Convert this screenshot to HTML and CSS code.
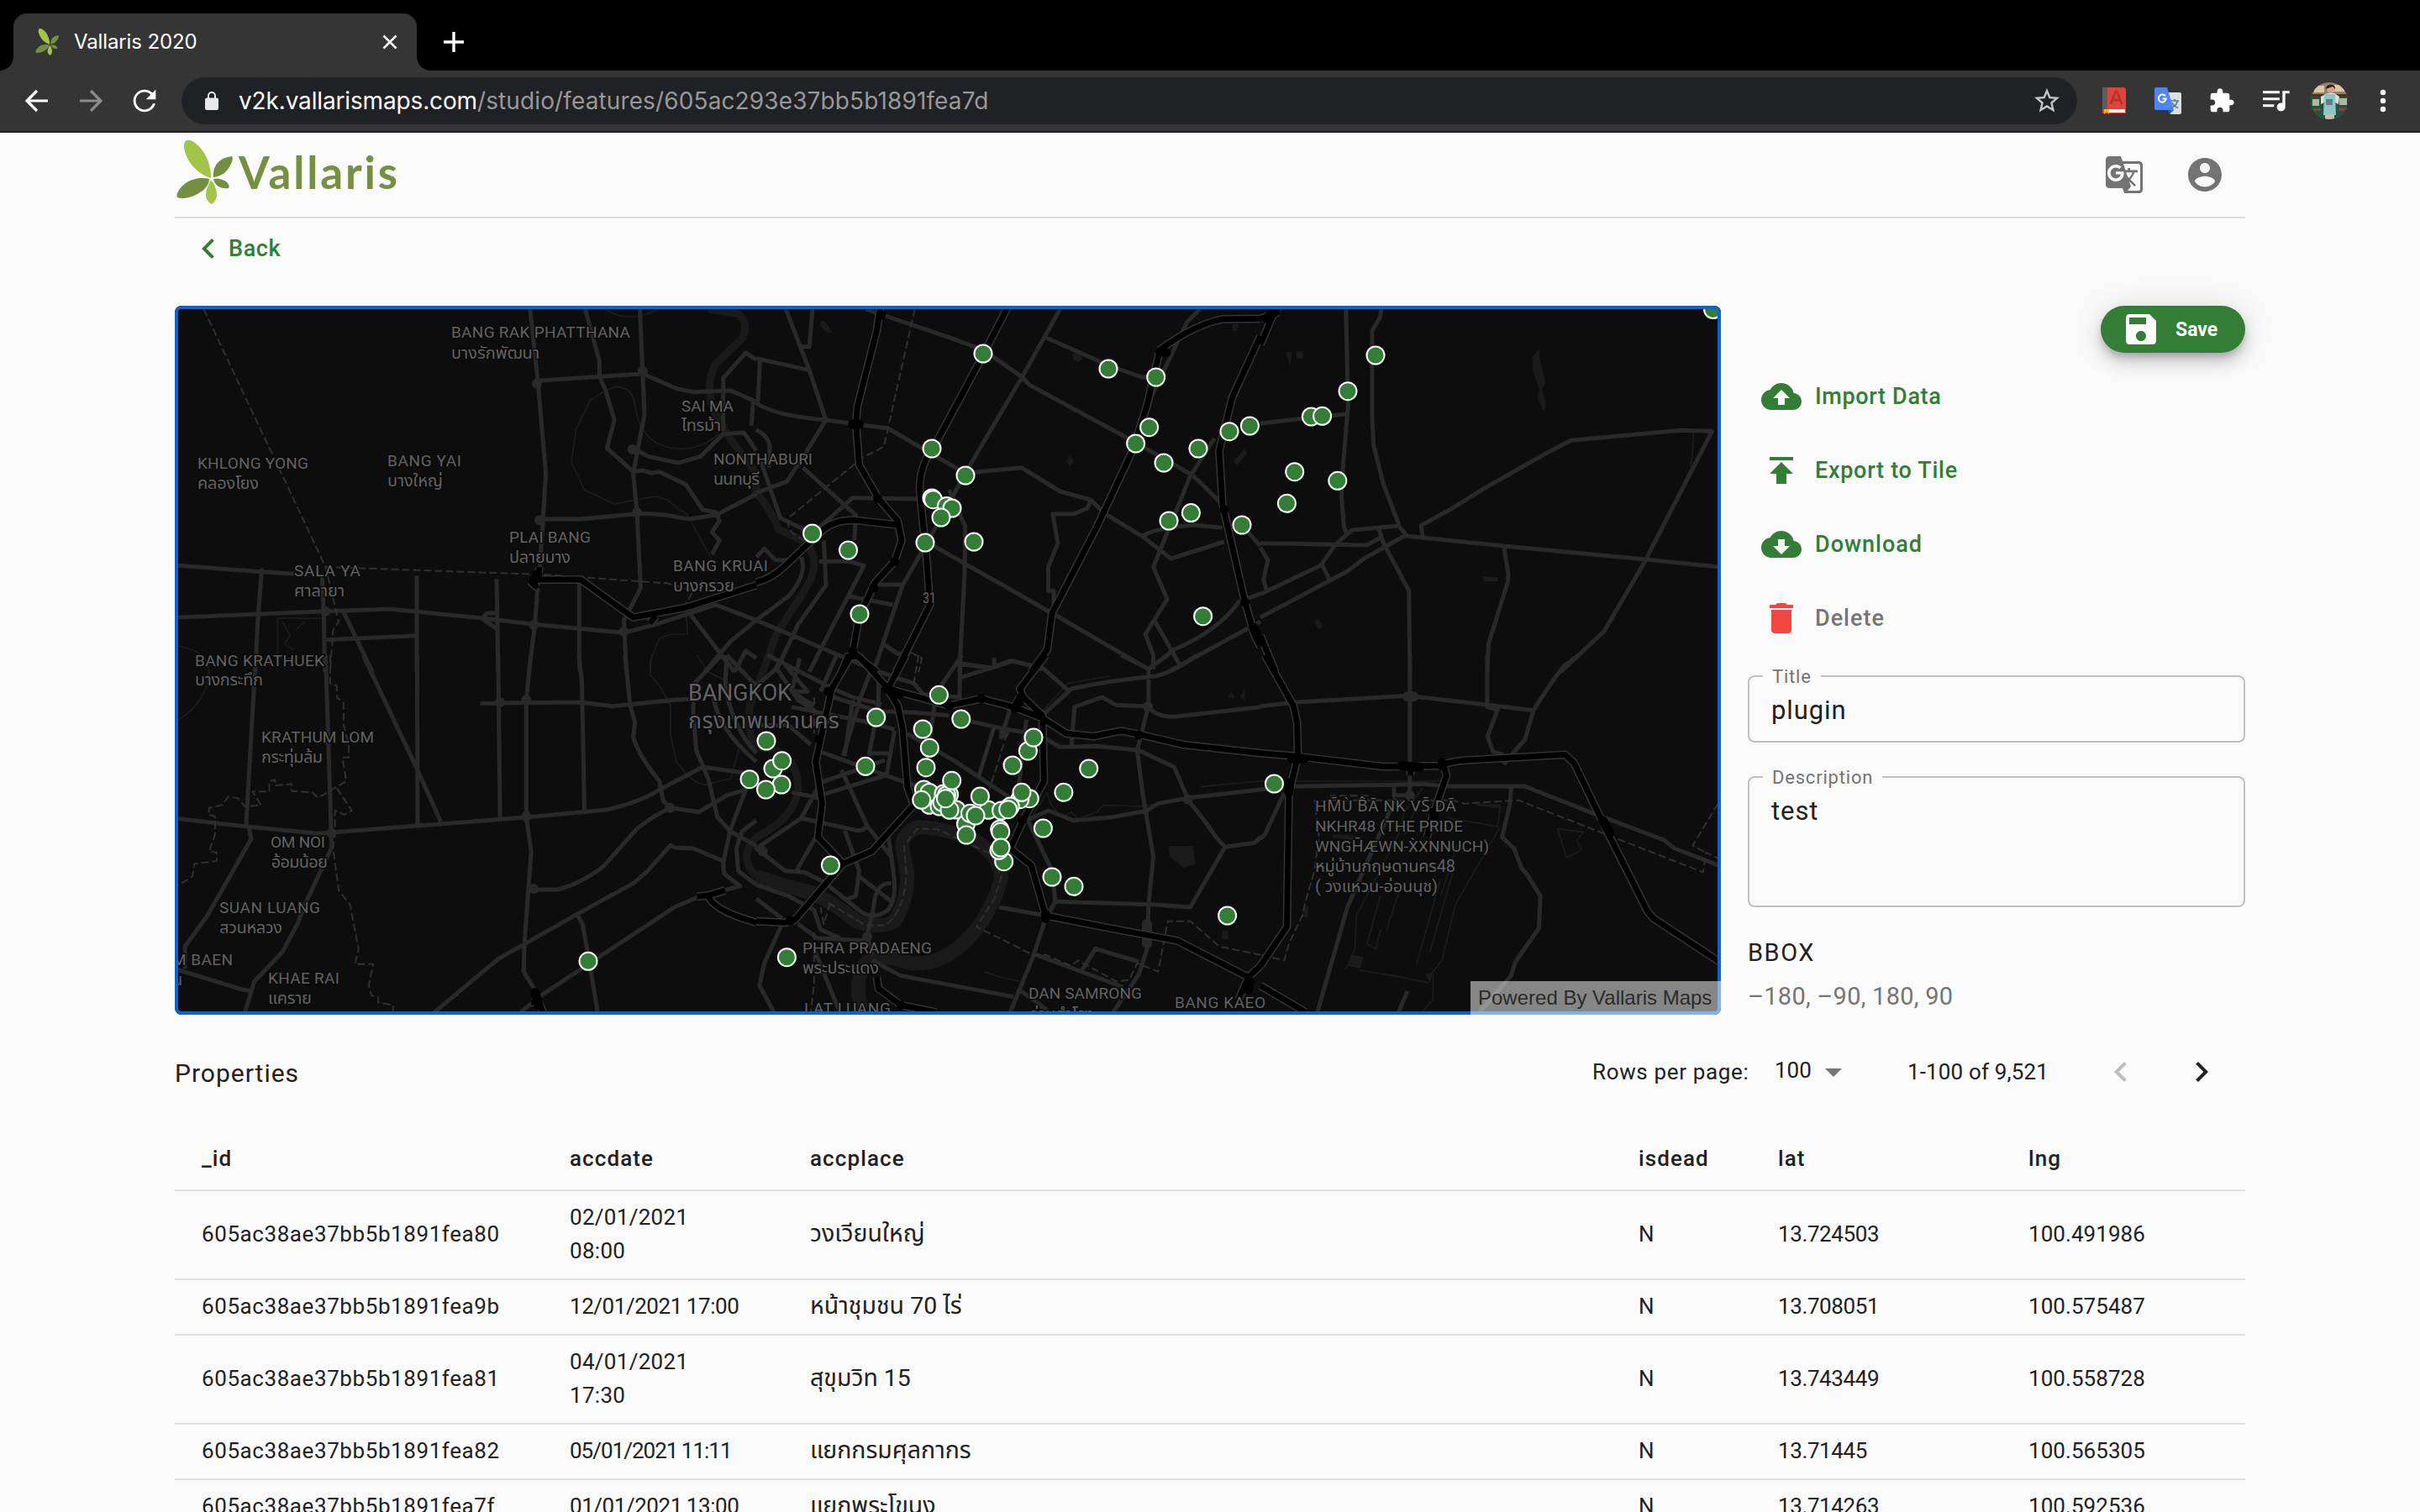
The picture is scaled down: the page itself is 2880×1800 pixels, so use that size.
FILE: index.html
```html
<!DOCTYPE html>
<html lang="en">
<head>
<meta charset="utf-8">
<title>Vallaris 2020</title>
<link rel="stylesheet" href="styles.css">
</head>
<body>
<svg width="0" height="0" class="sprite">
  <symbol id="leaf" viewBox="0 0 67 76">
    <path fill="#a2c449" d="M41 45C28 41 17 31 12 19 9 11 7 3 12 0c6-2 15 6 21 15 6 10 8 20 8 30z"/>
    <path fill="#748f41" d="M44 44c-1-12 5-23 22-25 2 3 0 7-2 11-4 8-11 13-20 14zM39 46C32 44 19 45 11 51 4 56-1 64 1 68c7 3 20-1 27-6 7-4 11-10 11-16zM44 46c6-1 14 1 17 5 2 3 2 5 1 6-9 1-16-2-18-11z"/>
    <path fill="#a2c449" d="M41 47c5 6 7 12 7 18 0 5-4 10-6 11-4-2-7-6-7-11 0-6 3-12 6-18z"/>
  </symbol>
</svg>

<header class="browser">
  <div class="tabs">
    <div class="tab">
      <svg class="favicon"><use href="#leaf"/></svg>
      <span class="tab-title">Vallaris 2020</span>
      <svg class="tab-close" viewBox="0 0 18 18"><path d="M1.500 1.500l15 15M16.500 1.500l-15 15"/></svg>
    </div>
    <svg class="tab-new" viewBox="0 0 24 24"><path d="M12 0v24M0 12h24"/></svg>
  </div>
  <div class="toolbar">
    <div class="tool"><svg width="40" height="40" viewBox="0 0 40 40" class="stroke"><path d="M33 20H8M20 8L8 20l12 12"/></svg></div>
    <div class="tool dim"><svg width="40" height="40" viewBox="0 0 40 40" class="stroke"><path d="M7 20h25M20 8l12 12-12 12"/></svg></div>
    <div class="tool"><svg width="40" height="40" viewBox="0 0 24 24"><path d="M17.650 6.350C16.200 4.900 14.210 4 12 4c-4.420 0-7.990 3.580-7.990 8s3.570 8 7.990 8c3.730 0 6.840-2.550 7.730-6h-1.800c-.8 2.500-3.100 4.250-5.930 4.250-3.450 0-6.250-2.800-6.250-6.250S8.550 5.750 12 5.750c1.750 0 3.300.75 4.400 1.850L13 11h7V4l-2.350 2.350z"/></svg></div>
    <div class="omnibox">
      <svg class="lock" viewBox="0 0 16 22"><path d="M14 7.500h-1V5A5 5 0 0 0 3 5v2.500H2a2 2 0 0 0-2 2V20a2 2 0 0 0 2 2h12a2 2 0 0 0 2-2V9.500a2 2 0 0 0-2-2zM5 7.500V5a3 3 0 0 1 6 0v2.500z"/></svg>
      <span class="url"><span class="host">v2k.vallarismaps.com</span><span class="path">/studio/features/605ac293e37bb5b1891fea7d</span></span>
      <svg class="star" viewBox="0 0 24 24"><path d="M22 9.240l-7.190-.62L12 2 9.190 8.630 2 9.240l5.460 4.730L5.820 21 12 17.270 18.180 21l-1.630-7.030L22 9.240zM12 15.400l-3.760 2.270 1-4.280-3.320-2.880 4.380-.38L12 6.100l1.710 4.040 4.380.38-3.320 2.880 1 4.280L12 15.400z"/></svg>
    </div>
    <div class="tools">
      <div class="tool"><svg width="28" height="32" viewBox="0 0 28 32"><path fill="#e0433b" d="M0 0h26l2 2v29H0z"/><path fill="#5c5c5c" d="M0 0h6v26H0z"/><path fill="#f3eeee" d="M7 26h20v4H7z"/><path fill="#f0b42c" d="M2 26h6v6l-3-3-3 3z"/><path fill="none" stroke="#b0332e" stroke-width="2.500" d="M10 20l5.500-15h2L23 20M12 15h9"/></svg></div>
      <div class="tool"><svg width="32" height="32" viewBox="0 0 32 32"><path fill="#dcdfe0" d="M14 6h16a2 2 0 0 1 2 2v22a2 2 0 0 1-2 2H19z"/><path fill="#5086ec" d="M2 0h13l8 27H2a2 2 0 0 1-2-2V2a2 2 0 0 1 2-2z"/><path fill="#3558c4" d="M16 27h7l-5 5z"/><path fill="none" stroke="#fff" stroke-width="2" d="M13 10.500a4.500 4.500 0 1 0 .8 3H9.500"/><path fill="none" stroke="#5a7d88" stroke-width="1.600" d="M19 16h10M24 14v2M27.500 16c-1 4-4 7-7 8M21 18c1 3 4 5 7 6.500"/></svg></div>
      <div class="tool"><svg width="32" height="32" viewBox="0 0 24 24"><path d="M20.500 11H19V7c0-1.100-.9-2-2-2h-4V3.500C13 2.120 11.880 1 10.500 1S8 2.120 8 3.500V5H4c-1.100 0-1.990.9-1.990 2v3.800H3.500c1.490 0 2.700 1.210 2.700 2.700s-1.210 2.700-2.700 2.700H2V20c0 1.100.9 2 2 2h3.800v-1.500c0-1.490 1.210-2.700 2.700-2.700 1.490 0 2.700 1.210 2.700 2.700V22H17c1.100 0 2-.9 2-2v-4h1.500c1.380 0 2.500-1.120 2.500-2.500S21.880 11 20.500 11z"/></svg></div>
      <div class="tool"><svg width="40" height="40" viewBox="0 0 24 24"><path d="M15 5H3v1.700h12V5zm0 4.800H3v1.700h12V9.800zM3 16.300h8v-1.700H3v1.700zM17 5v8.700c-.31-.11-.65-.18-1-.18a3 3 0 1 0 3 3V6.700h3V5h-5z"/></svg></div>
      <div class="tool"><svg width="44" height="44" viewBox="0 0 44 44"><clipPath id="av"><circle cx="22" cy="22" r="22"/></clipPath><g clip-path="url(#av)"><path fill="#9b7f63" d="M0 0h44v44H0z"/><path fill="#d9c9a8" d="M4 4h12v8H4zM28 3h12v8H28z"/><path fill="#4d3122" d="M0 14h44v3H0z"/><path fill="#205340" d="M0 17h44v27H0z"/><path fill="#a9b9a4" d="M2 20h8v8H2zM34 19h9v8h-9z"/><path fill="#8e3f39" d="M3 31h9v3H3zM33 30h9v4h-9z"/><path fill="#e0ded4" d="M12 17l8-4h8l6 4-1 9-4-2H16l-4 2z"/><path fill="#8fc4c8" d="M16 14h13l1 25H15z"/><path fill="#5d8288" d="M18 20h8v7h-8z"/><path fill="#c9bea9" d="M17 38h11v6H17z"/><circle cx="24" cy="8" r="5" fill="#d5a487"/><path fill="#2b2220" d="M18 8c0-7 12-7 11 0l-3-3z"/></g></svg></div>
      <div class="tool"><svg width="8" height="28" viewBox="0 0 8 28"><circle cx="4" cy="4" r="3.200"/><circle cx="4" cy="14" r="3.200"/><circle cx="4" cy="24" r="3.200"/></svg></div>
    </div>
  </div>
</header>

<div class="page">
  <div class="appbar">
    <div class="brand"><svg class="brand-leaf"><use href="#leaf"/></svg><span class="brand-name">Vallaris</span></div>
    <div class="app-actions">
      <svg class="icon" viewBox="0 0 24 24"><path d="M21 4H11l-1-3H3c-1.100 0-2 .9-2 2v15c0 1.100.9 2 2 2h8l1 3h9c1.100 0 2-.9 2-2V6c0-1.100-.9-2-2-2zM7 16c-2.760 0-5-2.240-5-5s2.240-5 5-5c1.350 0 2.480.5 3.350 1.300L9.030 8.570c-.38-.36-1.040-.78-2.030-.78-1.740 0-3.150 1.440-3.150 3.210S5.260 14.210 7 14.210c2.010 0 2.840-1.440 2.920-2.410H7v-1.710h4.680c.07.31.12.61.12 1.020C11.800 13.970 9.890 16 7 16zm6.170-5.420h3.700c-.43 1.250-1.110 2.430-2.050 3.470-.31-.35-.6-.72-.86-1.100l-.79-2.370zm8.330 9.920c0 .55-.45 1-1 1H14l2-2.500-1.040-3.100 3.100 3.100.92-.92-3.300-3.250.02-.02c1.130-1.250 1.930-2.690 2.400-4.220H20v-1.300h-4.530V8h-1.290v1.290h-1.440L11.460 5.500h9.040c.55 0 1 .45 1 1v14z"/></svg>
      <svg class="icon" viewBox="0 0 24 24"><path d="M12 2C6.480 2 2 6.480 2 12s4.480 10 10 10 10-4.480 10-10S17.520 2 12 2zm0 3c1.660 0 3 1.340 3 3s-1.340 3-3 3-3-1.340-3-3 1.340-3 3-3zm0 14.200c-2.500 0-4.710-1.280-6-3.220.03-1.990 4-3.080 6-3.080 1.990 0 5.970 1.090 6 3.080-1.290 1.940-3.500 3.220-6 3.220z"/></svg>
    </div>
  </div>

  <div class="back-row"><a class="back"><svg class="icon" viewBox="0 0 24 24"><path d="M15.410 7.410L14 6l-6 6 6 6 1.410-1.410L10.830 12z"/></svg><span>Back</span></a></div>

  <main class="content">
    <section class="map">
      <svg class="map-canvas" width="1840" height="844" viewBox="208 364 1840 844">
        <defs>
          <g id="motorways">
            <path transform="translate(200 350) scale(.44643 .33333)" d="M990 975L985 1020H1100L1240 1155 1380 1120 1568 1040M1300 1150l-15 25M965 1025l20 25"/>
            <path transform="translate(900 350) scale(.38265 .33333)" d="M388 30L375 130 315 400 310 460 320 610 380 730 440 810 452 880 430 955 370 1030 320 1150 300 1280 265 1350M300 1280L375 1350M785 40L700 230 560 530Q500 620 510 720L530 950 540 1110 435 1350M0 1030Q50 1015 90 970L200 850Q240 805 310 808L440 825M1568 88L1450 90Q1360 110 1255 200L1215 400 1170 560 1060 830 920 1140 905 1270 855 1350M1568 150L1480 370 1440 560 1450 750 1520 1100 1550 1220 1568 1260"/>
            <path transform="translate(1500 350) scale(.35714 .33333)" d="M65 40L40 80 0 180M0 88L60 65M0 1220L50 1350"/>
            <path transform="translate(200 780) scale(.44643 .33333)" d="M1410 862L1440 858 1485 840M1440 858Q1450 910 1568 955M975 1200L1000 1275M968 1240h25"/>
            <path transform="translate(900 780) scale(.38265 .33333)" d="M265 60L285 5H320L410 120 600 180 700 155 800 185 890 225 965 280 1050 290 1135 270 1200 285 1330 320 1568 350M265 60L235 120 200 300 185 380 205 530 192 650 270 745 360 700 415 630 490 535 470 470 455 260 440 180 410 125M465 0L412 115M900 0L820 120 830 150 890 215 895 450 830 590 790 690 855 750 900 930 1100 975 1310 1020 1530 1150 1568 1110M1530 1150L1500 1230M270 745L120 945 90 955 0 950M375 1150L380 1190 450 1250 560 1275M820 150L800 190"/>
            <path transform="translate(1500 780) scale(.35714 .33333)" d="M15 0L110 180 122 240 125 360 105 450 95 500 88 970 0 1110M0 350L110 360 410 398 600 395Q640 375 720 373L1015 355 1045 385 1160 640 1290 915 1310 940 1530 1095M610 390L620 430 575 570 555 650M500 400V430M0 1180L150 1275"/>
          </g>
        </defs>
        <path class="land" d="M208 364h1840v844H208z"/>

        <g class="river">
          <path transform="translate(200 350) scale(.44643 .33333)" d="M1440 54L1520 70Q1550 100 1530 160L1460 250Q1430 320 1455 420L1500 520 1568 640"/>
          <path transform="translate(900 350) scale(.38265 .33333)" d="M0 640V710Q40 760 70 840L160 890Q200 960 160 1040L60 1220 20 1350"/>
          <path transform="translate(900 780) scale(.38265 .33333)" d="M20 60L-20 180Q-30 280 0 330Q130 330 130 480Q120 580 0 650Q-60 720 0 790"/>
          <path class="wide" transform="translate(900 780) scale(.38265 .33333)" d="M0 790Q100 830 180 850Q260 900 310 950Q380 980 430 950Q470 880 470 780L455 690Q450 640 500 615Q560 610 680 660Q760 720 762 790Q750 870 690 970Q600 1110 480 1100Q360 1050 330 1120Q305 1180 330 1275"/>
        </g>
        <g class="pond">
          <path transform="translate(900 350) scale(.38265 .33333)" d="M200 95l15 5 24 40-20-5-20-20zM983 212h22l10 20-15 12-15-10zM1480 108h20l-5 25h-12zM975 577l13 20-12 18-12-18zM1520 552l5 20-30 40-10-15z"/>
          <path transform="translate(1500 350) scale(.35714 .33333)" d="M928 195L905 230 908 275 930 340 925 375 945 420 952 395 938 335 950 318 930 230zM737 1008l10 18h45v-14zM180 1168l12 30 15-8-12-30zM85 210l20-5-5 50zM120 205h22v25h-22z"/>
          <path transform="translate(900 780) scale(.38265 .33333)" d="M1283 682h75l8 65-35 12-45-40zM1478 130l12 25-22-5zM1520 115v50l-14-15zM1450 985h18v30h-20z"/>
          <path transform="translate(1500 780) scale(.35714 .33333)" d="M305 1068l38 10-10 40-40-8zM720 530l80 2v15l-80-10zM145 895h15l-2 40h-20zM240 640l85 5-15 15-70-8zM550 1140l25-10-10 42z"/>
        </g>
        <g class="thin">
          <path transform="translate(200 350) scale(.44643 .33333)" d="M1165 54Q1230 110 1305 54M1190 332Q1240 330 1245 400Q1260 550 1370 553 1420 553 1470 500M1190 332L1165 345 1125 380 1088 480 1075 600 1110 700 1190 750 1300 722 1330 735 1385 790 1450 950M27 1257Q105 1275 110 1350M1380 1130L1385 1215 1340 1215 1310 1230 1285 1310V1350M410 1158H292V1300H360M305 1170l20 50-15 30 25 20M340 1200l25-30"/>
          <path transform="translate(200 780) scale(.44643 .33333)" d="M27 232Q110 160 108 50M1290 0L1285 70 1310 110 1340 180V290L1355 380Q1400 460 1430 463L1500 440 1525 320M1410 0L1440 60 1500 100"/>
          <path transform="translate(1500 350) scale(.35714 .33333)" d="M1443 495L1440 570 1433 620"/>
          <path transform="translate(900 780) scale(.38265 .33333)" d="M860 570L905 490 915 530 950 580 980 560 1000 585 1060 560 1080 535 1200 540 1250 530M890 200L970 100 1100 75M710 1130L760 1150 820 1165M1380 470L1568 450"/>
          <path transform="translate(1500 780) scale(.35714 .33333)" d="M0 450H600M540 475L480 560 460 640 320 930 315 1050 285 1120M600 800L520 1105M640 780L565 1060M655 680L600 860M420 980L470 820 430 800M800 610L650 890 605 1090 575 1130V1230L540 1272M330 1125L460 1148 560 1170M400 860L355 1030 385 1050 400 980M620 580L790 612 800 540M520 540L480 640M990 620l85 12-20 30 15 35-50 25z"/>
        </g>
        <g class="road">
          <path transform="translate(200 350) scale(.44643 .33333)" d="M965 54L985 300 1007 640 1000 800 990 990M985 1050L978 1180 962 1350M1112 54L1150 240V295L1165 340 1190 450 1170 550 1240 635M1258 54L1265 280 1270 430 1240 640 1250 780 1260 1050 1215 1165 1222 1350M985 310L1265 285 1360 340 1400 350 1500 345 1568 385M1240 550L1280 580 1360 603 1420 580 1480 500 1535 495 1568 560M1480 490V300L1540 210 1568 235M1240 635L1265 630 1290 640 1310 635 1380 680 1425 770 1460 780 1470 810 1450 850 1470 880 1450 930M985 804H1100L1250 785C1330 780 1350 800 1390 803L1460 790 1568 715M27 970L250 992 340 1000M27 1155L420 1133 590 1125 840 1158 975 1180 1215 1210 1300 1180 1460 1110 1568 1165M250 980L240 1150 232 1350M410 1000L415 1133 418 1350M467 1133L545 1350M420 1235L662 1220M663 1005V1350M876 1018L880 1350M1096 1035V1300L1098 1350M1390 1140L1510 1350M1568 1165L1500 1240 1430 1350M1510 1350L1540 1275 1568 1300M876 1140H850L838 1160 876 1195M1560 380L1555 470"/>
          <path transform="translate(900 350) scale(.38265 .33333)" d="M92 54L165 272 217 450 155 565 95 670 0 710M175 54L165 188H140M0 230L165 272M12 235L5 385M0 390Q60 435 217 450L410 480 650 640 825 620 945 705 1040 735 1085 785 1200 865 1290 945 1455 885M340 54L600 155 706 200 825 295 850 325 1180 530 1360 650 1440 740M945 54L825 300 650 640 575 800 455 1040 370 1330M900 155L1095 255 1200 297H1243M1380 54L1340 100 1215 400M145 620L310 790 305 880M170 860L300 728 500 732M0 485Q45 510 42 560L40 620M15 600L75 800 165 850M210 880L217 1040 130 1180 60 1350M195 955H290L335 970 200 1270 165 1350M380 1038H455M290 1080L425 1110M0 1165L380 1350M0 1165L100 1080Q160 1000 140 940M545 895L920 1140 1220 1340M1220 1340L1300 1270Q1440 1200 1500 1100L1568 1070M1280 1350L1568 1170M600 700L650 830 648 1000 632 1350M1040 735L1030 765 990 785H922L938 890 908 975V1060H925V1140M1425 515L1350 650 1235 975 1278 1090 1210 1215 1235 1290V1340M1238 1165L1315 1320M1200 865Q1240 835 1360 825L1450 835M1511 826L1568 900M630 1320L730 1335 800 1310 890 1340M395 1250L440 1285 480 1280M0 940L25 910 60 950 120 950"/>
          <path transform="translate(1500 350) scale(.35714 .33333)" d="M285 54L292 400 275 620 270 720 278 830 287 855M403 54L398 85 372 132V430L377 540 410 680 462 825M0 462L140 445 290 428M0 890L355 897 400 870M0 1072L200 970 250 895 305 843 460 828 490 865 811 900 1285 948 1530 975M0 1155L290 990 345 945 490 858M205 965L230 1020M395 840L410 890 495 1060 498 1350M541 865L535 827 640 765 745 695 950 570 1035 523 1400 487 1505 490 1300 915 1285 948 1145 1205 1020 1330 1000 1350M811 900L826 1000 824 1030 760 1250 756 1350M0 905L25 950 10 1020 20 1055"/>
          <path transform="translate(200 780) scale(.44643 .33333)" d="M232 45L208 610M215 615L222 655 105 930 45 1040V1120M420 0L435 635 435 690 365 890 345 960 305 1060 230 1165 205 1275M18 583L210 612 400 637 960 578 1165 553Q1260 525 1310 480L1425 400 1550 422M520 0L665 410 727 595M664 0L665 603M880 0L885 578M967 0L955 160 955 580 968 700 950 1030 948 1130 980 1200M1095 0L1103 90 1110 553M1218 0L1232 180 1245 240 1240 290Q1250 350 1310 450L1320 520 1340 545M832 172L1100 168 1185 182 1350 160 1400 155M1475 0L1400 105V200L1408 340 1440 440 1465 580 1500 630 1568 680M968 837H1040Q1100 815 1160 755L1250 620Q1290 575 1340 545L1415 560 1490 500 1540 480 1500 620 1480 740 1482 780 1525 825 1480 840M710 1275L880 1085 1090 925 1240 815 1275 775 1340 678 1350 687 1400 690 1480 735M1090 925L1105 960 1125 1110 1145 1275M940 1275L1000 1210 1350 900 1420 860M18 1120L200 1195 225 1200M1568 590L1530 630 1515 690 1520 770 1568 820M1490 0L1485 100Q1500 250 1568 350M1453 150Q1470 270 1568 380M1490 0L1568 110"/>
          <path transform="translate(900 780) scale(.38265 .33333)" d="M35 0L240 120 300 150 390 175M60 40L130 160 250 250M75 15L160 130H110M75 15L60 50 0 110M135 10L110 130 180 180M250 0L200 130M355 60L325 150 270 360M380 80V180L350 360M110 185L350 240 430 265M300 20L420 75 490 100 520 140 640 150M240 150L380 200 490 205 600 215M555 170L525 440M200 345L405 430 530 480M200 455L400 375M200 500L400 430M430 270L405 430M300 160L275 360M355 350H410M470 280L620 380 790 510M640 230L780 265 880 285 945 328 1060 325 1190 340 1300 400 1345 520 1390 585 1430 650 1458 685 1550 670 1568 650M740 255L690 440M790 190L760 300M840 230L815 480M265 410L345 610 420 720M345 610Q330 630 310 625L140 582 200 455M140 582L0 690 90 770 150 775 210 810 330 920Q370 945 410 910Q440 870 425 760L410 640M275 625L320 770 310 860 285 870M320 790L420 880M420 815Q370 810 365 900L345 1000 360 1070M190 640L125 770M635 0L632 145M635 80L745 40 790 20 890 45 970 125M640 0L580 100 568 142M640 30L720 45M740 10V35M890 215L980 120Q1100 90 1240 75Q1300 60 1370 0M1135 0L1220 48 1280 0M1220 48V180L1185 340 1200 480 1235 720 1220 890 1215 1050 1190 1140 1110 1275M980 325L990 185 1075 150 1120 178 1220 183Q1240 220 1300 220L1568 185M840 590L910 555 985 590 1100 580 1215 555 1250 530 1340 510 1568 480M845 590L920 770 930 880 1230 890 1350 900 1458 685M930 880L900 940 860 1080 790 1275M755 900L900 930M360 1090L450 1145 800 1220M825 1200L910 1272M870 1070L1140 1185M1010 1130L1055 1048 1190 1095M80 960L25 1100 10 1180 55 1275M130 960L190 1010 350 1020M180 1050L260 1275M0 820L100 860 180 910 200 980 260 1010M0 870L80 940M110 490L200 510M0 250L100 250 170 320"/>
          <path transform="translate(1500 780) scale(.35714 .33333)" d="M0 182L120 168 490 145 760 178 910 197Q960 110 1010 40L1060 0M498 0V510M756 0V185L790 195 757 290 775 345 810 355M910 197L882 300 810 390M0 480L120 468 450 463 540 460 620 468H880L1110 565 1345 660 1380 690 1530 752M445 463V500H500M80 490L15 640 0 655M450 510L290 900 190 1275M835 470L832 530 805 650 845 690 870 760 890 785 933 860 928 975 850 1095 835 1145 730 1275M490 1200L460 1275"/>
        </g>
        <g class="junction">
          <path transform="translate(200 350) scale(.44643 .33333)" d="M983 320h.1M1265 275h.1M1238 555h.1M990 808h.1M1250 780h.1M420 1133h.1M975 1182h.1M1215 1205h.1"/>
          <path transform="translate(200 780) scale(.44643 .33333)" d="M885 168h.1M955 160h.1M955 575h.1M1338 545h.1M975 835h.1M435 635h.1"/>
          <path transform="translate(900 780) scale(.38265 .33333)" d="M1218 183h.1M1342 515h.1M345 1005h.1M1215 960V1030M770 280h.1M20 700h.1"/>
          <path transform="translate(1500 780) scale(.35714 .33333)" d="M490 148h20M498 500h.1"/>
        </g>
        <g class="border">
          <path transform="translate(200 350) scale(.44643 .33333)" d="M95 54L420 975 455 1170 440 1200 432 1350M420 975L1000 1002 1330 1033 1400 1060 1375 1120"/>
          <path transform="translate(900 350) scale(.38265 .33333)" d="M493 54L397 545 330 585 100 800Q90 860 165 885M480 1280L515 1300 505 1350"/>
          <path transform="translate(200 780) scale(.44643 .33333)" d="M432 0V100L450 110V150L468 170V250L482 320V365H465L475 450 400 510 385 490 330 485V460L285 465V445L270 450V487H225L248 535 205 540 185 510 160 505 145 535 110 545 108 570 125 575V640L110 700 130 705V735L70 745 65 790 20 828M450 475L490 555 470 570 445 555V640L440 690 455 840 485 890 508 1050 498 1103H547L535 1180 542 1215 560 1220V1240L600 1250V1272"/>
          <path transform="translate(900 780) scale(.38265 .33333)" d="M180 150V280M505 0L490 100M230 885L210 960 200 900M225 885L340 965 400 965Q460 920 467 780L460 680 500 620H560L730 710 762 790 740 870 685 970 860 1070 900 1070 980 1110 1000 1090 1120 1165 1160 1160 1185 1100 1250 1130 1280 950 1350 950 1440 1040 1568 1070M780 280L725 480M740 260L690 440M180 990V1170L170 1275"/>
          <path transform="translate(1500 780) scale(.35714 .33333)" d="M360 502H235V518H180L195 650 180 770 150 880 140 930 95 1030 80 1090 0 1070M235 518H640L680 530 860 518 1475 775 1485 705 1525 725M1525 530L1440 680 1485 705"/>
        </g>
        <use href="#motorways" class="casing"/>
        <use href="#motorways" class="core"/>
        <g class="hub">
          <path transform="translate(900 350) scale(.38265 .33333)" d="M388 75h.1M1255 205l20 5M1545 1190l10 20M300 465h20M1520 1100h.1M300 1275h.1M378 730h.1M430 955h.1M365 1050h.1M1455 770h.1"/>
          <path transform="translate(900 780) scale(.38265 .33333)" d="M405 120l40 20M825 150l-20 40M900 925v15M1190 285h.1M1535 1165l-5 30M225 130h.1M600 180h.1M105 948h.1M828 590h.1M700 155h.1M195 300h.1M450 1250h.1"/>
          <path transform="translate(1500 780) scale(.35714 .33333)" d="M105 370h40M470 395l60 5M1140 590l25 45M95 455v35M605 385v10M578 560v20"/>
          <path transform="translate(200 350) scale(.44643 .33333)" d="M985 1000l-10 25"/>
          <path transform="translate(200 780) scale(.44643 .33333)" d="M978 1205l10 45"/>
          <path transform="translate(1500 350) scale(.35714 .33333)" d="M50 62l-30 25"/>
        </g>

        <g class="labels">
          <text x="537" y="402" textLength="213">BANG RAK PHATTHANA</text><text class="th" x="537" y="427" textLength="105">บางรักพัฒนา</text>
          <text x="235" y="558" textLength="132">KHLONG YONG</text><text class="th" x="235" y="582" textLength="73">คลองโยง</text>
          <text x="461" y="555" textLength="88">BANG YAI</text><text class="th" x="461" y="579" textLength="66">บางใหญ่</text>
          <text x="811" y="490" textLength="62">SAI MA</text><text class="th" x="811" y="513" textLength="47">ไทรม้า</text>
          <text x="849" y="553" textLength="118">NONTHABURI</text><text class="th" x="849" y="577" textLength="55">นนทบุรี</text>
          <text x="606" y="646" textLength="97">PLAI BANG</text><text class="th" x="606" y="670" textLength="73">ปลายบาง</text>
          <text x="350" y="686" textLength="79">SALA YA</text><text class="th" x="350" y="710" textLength="60">ศาลายา</text>
          <text x="801" y="680" textLength="113">BANG KRUAI</text><text class="th" x="801" y="704" textLength="73">บางกรวย</text>
          <text x="232" y="793" textLength="154">BANG KRATHUEK</text><text class="th" x="232" y="816" textLength="81">บางกระทึก</text>
          <text x="311" y="884" textLength="134">KRATHUM LOM</text><text class="th" x="311" y="908" textLength="73">กระทุ่มล้ม</text>
          <text x="322" y="1009" textLength="65">OM NOI</text><text class="th" x="322" y="1033" textLength="67">อ้อมน้อย</text>
          <text x="261" y="1087" textLength="120">SUAN LUANG</text><text class="th" x="261" y="1111" textLength="75">สวนหลวง</text>
          <text x="205" y="1149" textLength="72">M BAEN</text><text class="th" x="205" y="1173">น</text>
          <text x="319" y="1171" textLength="85">KHAE RAI</text><text class="th" x="319" y="1195" textLength="52">แคราย</text>
          <text x="955" y="1135" textLength="154">PHRA PRADAENG</text><text class="th" x="955" y="1159" textLength="91">พระประแดง</text>
          <text x="957" y="1207" textLength="103">LAT LUANG</text>
          <text x="1224" y="1189" textLength="135">DAN SAMRONG</text><text class="th" x="1224" y="1214" textLength="78">ด่านสำโรง</text>
          <text x="1398" y="1200" textLength="108">BANG KAEO</text>
          <text x="1098" y="718" textLength="16" lengthAdjust="spacingAndGlyphs">31</text>
          <text x="1565" y="966" textLength="168">HM̄Ù B̂Ā NK VS̄ DĀ</text>
          <text x="1565" y="990" textLength="176">NKHR48 (THE PRIDE</text>
          <text x="1565" y="1014" textLength="207">WNGH̄ÆWN-X̀XNNUCH)</text>
          <text class="th" x="1565" y="1038" textLength="167">หมู่บ้านกฤษดานคร48</text>
          <text class="th" x="1565" y="1062" textLength="146">( วงแหวน-อ่อนนุช)</text>
          <text class="city" x="819" y="834" textLength="123">BANGKOK</text><text class="city" x="819" y="867" textLength="180">กรุงเทพมหานคร</text>
        </g>

        <g class="markers">
          <circle cx="1170" cy="421" r="10.500"/><circle cx="1109" cy="534" r="10.500"/><circle cx="1149" cy="566" r="10.500"/><circle cx="1109" cy="593" r="10.500"/><circle cx="1110.500" cy="594.700" r="10.500"/><circle cx="1126.500" cy="602.500" r="10.500"/><circle cx="1133" cy="605" r="10.500"/><circle cx="1120" cy="616" r="10.500"/><circle cx="1101" cy="646" r="10.500"/><circle cx="1159" cy="645" r="10.500"/><circle cx="966.600" cy="635" r="10.500"/><circle cx="1009.500" cy="655" r="10.500"/><circle cx="1023" cy="731" r="10.500"/><circle cx="1319" cy="439" r="10.500"/><circle cx="1375.700" cy="449" r="10.500"/><circle cx="1367.600" cy="508.700" r="10.500"/><circle cx="1351.600" cy="528" r="10.500"/><circle cx="1385" cy="551" r="10.500"/><circle cx="1426" cy="534" r="10.500"/><circle cx="1463" cy="513.700" r="10.500"/><circle cx="1487.400" cy="507" r="10.500"/><circle cx="1391" cy="620" r="10.500"/><circle cx="1417.400" cy="610.600" r="10.500"/><circle cx="1478" cy="625" r="10.500"/><circle cx="1431.600" cy="733.700" r="10.500"/>
          <circle cx="1637" cy="423" r="10.500"/><circle cx="1604" cy="465.700" r="10.500"/><circle cx="1560.400" cy="496" r="10.500"/><circle cx="1573.600" cy="495.300" r="10.500"/><circle cx="1540.700" cy="561.700" r="10.500"/><circle cx="1591.800" cy="572.300" r="10.500"/><circle cx="1531.400" cy="599.300" r="10.500"/><circle cx="2038.600" cy="368.500" r="10.500"/>
          <circle cx="892" cy="927.700" r="10.500"/><circle cx="700" cy="1144.300" r="10.500"/><circle cx="912" cy="882" r="10.500"/><circle cx="920" cy="915" r="10.500"/><circle cx="930.600" cy="905.700" r="10.500"/><circle cx="930" cy="934" r="10.500"/><circle cx="911.500" cy="940" r="10.500"/><circle cx="1042.700" cy="854" r="10.500"/><circle cx="1030" cy="912.300" r="10.500"/><circle cx="1117.400" cy="827.300" r="10.500"/><circle cx="1143.800" cy="856" r="10.500"/><circle cx="1098.200" cy="868" r="10.500"/><circle cx="1106.300" cy="890.300" r="10.500"/><circle cx="1102" cy="913.700" r="10.500"/>
          <circle cx="1099.400" cy="940" r="10.500"/><circle cx="1106" cy="958.300" r="10.500"/><circle cx="1106" cy="943.500" r="10.500"/><circle cx="1096.700" cy="952.300" r="10.500"/><circle cx="1118" cy="960" r="10.500"/><circle cx="1123" cy="945" r="10.500"/><circle cx="1129.600" cy="946" r="10.500"/><circle cx="1126.500" cy="946.700" r="10.500"/><circle cx="1121" cy="955" r="10.500"/><circle cx="1138" cy="964" r="10.500"/><circle cx="1130" cy="964.300" r="10.500"/><circle cx="1125.400" cy="950.700" r="10.500"/><circle cx="1132.700" cy="929.300" r="10.500"/>
          <circle cx="1149.500" cy="981" r="10.500"/><circle cx="1154.500" cy="968.300" r="10.500"/><circle cx="1176.300" cy="964.300" r="10.500"/><circle cx="1166.400" cy="948" r="10.500"/><circle cx="1161" cy="971" r="10.500"/><circle cx="1150" cy="994" r="10.500"/><circle cx="1225.300" cy="950.700" r="10.500"/><circle cx="1213.800" cy="951.700" r="10.500"/><circle cx="1216" cy="943.300" r="10.500"/><circle cx="1191.600" cy="965" r="10.500"/><circle cx="1202.300" cy="960" r="10.500"/><circle cx="1199.700" cy="963.700" r="10.500"/><circle cx="1205" cy="911" r="10.500"/><circle cx="1223.400" cy="894" r="10.500"/><circle cx="1230" cy="878" r="10.500"/><circle cx="1295.700" cy="915" r="10.500"/><circle cx="1265.900" cy="943.300" r="10.500"/><circle cx="1241.400" cy="986" r="10.500"/><circle cx="1189.700" cy="987.300" r="10.500"/><circle cx="1190.800" cy="990.300" r="10.500"/><circle cx="1194.700" cy="1025.700" r="10.500"/><circle cx="1189" cy="1012.300" r="10.500"/><circle cx="1191" cy="1009" r="10.500"/><circle cx="1252" cy="1044" r="10.500"/><circle cx="1278" cy="1055.300" r="10.500"/><circle cx="988.400" cy="1030" r="10.500"/><circle cx="936.400" cy="1139.700" r="10.500"/><circle cx="1460.600" cy="1090" r="10.500"/><circle cx="1516.400" cy="933" r="10.500"/>
        </g>
      </svg>
      <div class="attribution">Powered By Vallaris Maps</div>
    </section>

    <aside class="side">
      <div class="save-row"><button class="save"><svg class="icon" viewBox="0 0 24 24"><path d="M17 3H5c-1.110 0-2 .9-2 2v14c0 1.100.89 2 2 2h14c1.100 0 2-.9 2-2V7l-4-4zm-5 16c-1.660 0-3-1.340-3-3s1.340-3 3-3 3 1.340 3 3-1.340 3-3 3zm3-10H5V5h10v4z"/></svg><span>Save</span></button></div>
      <nav class="menu">
        <a class="item"><svg class="icon" viewBox="0 0 24 24"><path d="M19.350 10.040C18.670 6.590 15.640 4 12 4 9.110 4 6.600 5.640 5.350 8.040 2.340 8.360 0 10.910 0 14c0 3.310 2.690 6 6 6h13c2.760 0 5-2.240 5-5 0-2.640-2.050-4.780-4.650-4.960zM14 13v4h-4v-4H7l5-5 5 5h-3z"/></svg><span class="t-import">Import Data</span></a>
        <a class="item"><svg class="icon" viewBox="0 0 24 24"><path d="M5 4v2h14V4H5zm0 10h4v6h6v-6h4l-7-7-7 7z"/></svg><span class="t-export">Export to Tile</span></a>
        <a class="item"><svg class="icon" viewBox="0 0 24 24"><path d="M19.350 10.040C18.670 6.590 15.640 4 12 4 9.110 4 6.600 5.640 5.350 8.040 2.340 8.360 0 10.910 0 14c0 3.310 2.690 6 6 6h13c2.760 0 5-2.240 5-5 0-2.640-2.050-4.780-4.650-4.960zM17 13l-5 5-5-5h3V9h4v4h3z"/></svg><span class="t-download">Download</span></a>
        <a class="item delete"><svg class="icon" viewBox="0 0 24 24"><path d="M6 19c0 1.100.9 2 2 2h8c1.100 0 2-.9 2-2V7H6v12zM19 4h-3.500l-1-1h-5l-1 1H5v2h14V4z"/></svg><span class="t-delete">Delete</span></a>
      </nav>
      <div class="field title"><label>Title</label><span class="value">plugin</span></div>
      <div class="field description"><label>Description</label><span class="value">test</span></div>
      <div class="bbox-title">BBOX</div>
      <div class="bbox-value">–180, –90, 180, 90</div>
    </aside>
  </main>

  <div class="table-bar">
    <h2>Properties</h2>
    <div class="pager">
      <span class="rows">Rows per page:</span>
      <span class="size">100</span>
      <svg class="caret" viewBox="0 0 20 10"><path d="M0 0h20L10 10z"/></svg>
      <span class="range">1-100 of 9,521</span>
      <svg class="icon prev" viewBox="0 0 24 24"><path d="M15.410 7.410L14 6l-6 6 6 6 1.410-1.410L10.830 12z"/></svg>
      <svg class="icon next" viewBox="0 0 24 24"><path d="M8.590 16.590L13.170 12 8.590 7.410 10 6l6 6-6 6z"/></svg>
    </div>
  </div>

  <table class="data">
    <colgroup><col class="c-id"><col class="c-date"><col class="c-place"><col class="c-dead"><col class="c-lat"><col class="c-lng"></colgroup>
    <thead><tr><th>_id</th><th>accdate</th><th>accplace</th><th>isdead</th><th>lat</th><th>lng</th></tr></thead>
    <tbody>
      <tr><td>605ac38ae37bb5b1891fea80</td><td>02/01/2021<br>08:00</td><td>วงเวียนใหญ่</td><td>N</td><td>13.724503</td><td>100.491986</td></tr>
      <tr><td>605ac38ae37bb5b1891fea9b</td><td class="one-line">12/01/2021 17:00</td><td>หน้าชุมชน 70 ไร่</td><td>N</td><td>13.708051</td><td>100.575487</td></tr>
      <tr><td>605ac38ae37bb5b1891fea81</td><td>04/01/2021<br>17:30</td><td>สุขุมวิท 15</td><td>N</td><td>13.743449</td><td>100.558728</td></tr>
      <tr><td>605ac38ae37bb5b1891fea82</td><td class="one-line narrow">05/01/2021 11:11</td><td>แยกกรมศุลกากร</td><td>N</td><td>13.71445</td><td>100.565305</td></tr>
      <tr><td>605ac38ae37bb5b1891fea7f</td><td class="one-line">01/01/2021 13:00</td><td>แยกพระโขนง</td><td>N</td><td>13.714263</td><td>100.592536</td></tr>
    </tbody>
  </table>
</div>
</body>
</html>
```
FILE: styles.css
```css
* { box-sizing: border-box; }
html, body { margin: 0; height: 1800px; overflow: hidden; }
body {
  background: #fafafa;
  color: #212121;
  font: 26px/40px Roboto, "Noto Sans", "Noto Sans Thai", sans-serif;
}
svg { display: block; flex: none; }
.sprite { position: absolute; }
.icon { width: 48px; height: 48px; fill: currentColor; }

/* Browser frame */
.browser { height: 158px; background: #353535; border-bottom: 2px solid #202124; color: #fff; }
.tabs { display: flex; height: 84px; padding: 16px 0 0 16px; background: #000; align-items: flex-start; }
.tab {
  position: relative; display: flex; align-items: center; width: 480px; height: 68px;
  padding: 0 23px 0 26px; background: #353535; border-radius: 16px 16px 0 0;
}
.tab::before, .tab::after { content: ""; position: absolute; bottom: 0; width: 16px; height: 16px; }
.tab::before { left: -16px; background: radial-gradient(circle at 0 0, transparent 15.5px, #353535 16px); }
.tab::after { right: -16px; background: radial-gradient(circle at 100% 0, transparent 15.5px, #353535 16px); }
.favicon { width: 28px; height: 32px; }
.tab-title { flex: 1; margin-left: 18px; font: 24px/32px Inter, sans-serif; letter-spacing: -.12px; }
.tab-close { width: 18px; height: 18px; stroke: #fff; stroke-width: 2.6; }
.tab-new { width: 24px; height: 24px; margin: 22px 0 0 32px; stroke: #fff; stroke-width: 3.4; }
.toolbar { display: flex; align-items: center; height: 72px; padding: 0 12px; }
.tool { display: flex; align-items: center; justify-content: center; width: 64px; height: 64px; fill: #fff; }
.stroke { fill: none; stroke: #fff; stroke-width: 3.2; }
.dim .stroke { stroke: #8b8b8b; }
.omnibox {
  display: flex; align-items: center; width: 2256px; height: 56px; margin: 0 12px;
  padding: 0 18px 0 28px; border-radius: 28px; background: #202124;
}
.lock { width: 16px; height: 22px; fill: #e8e8e8; }
.url { flex: 1; margin-left: 24px; font: 28px/36px Inter, sans-serif; white-space: nowrap; }
.host { letter-spacing: -.15px; }
.path { color: #97989a; letter-spacing: .12px; }
.star { width: 36px; height: 36px; fill: #c4c5c6; }
.tools { display: flex; }

/* App header */
.page { width: 2464px; margin: 0 auto; }
.appbar { display: flex; justify-content: space-between; height: 102px; border-bottom: 2px solid #dcdcdc; }
.brand { display: flex; align-items: center; padding: 0 2px 6px; }
.brand-leaf { width: 67px; height: 76px; }
.brand-name { margin: 0 0 0 7px; color: #758f43; font: 700 53px/60px Lato, sans-serif; letter-spacing: 2.8px; }
.app-actions { display: flex; align-items: center; gap: 48px; padding-right: 24px; color: #737373; }
.back-row { height: 104px; padding: 12px 16px; }
.back { display: inline-flex; align-items: center; color: #337d37; font-weight: 500; font-size: 27px; letter-spacing: .6px; }
.back span { margin-top: -1px; }

/* Map and side panel */
.content { display: grid; grid-template-columns: 1840px 592px; column-gap: 32px; height: 844px; }
.map { position: relative; height: 844px; border-radius: 8px; overflow: hidden; }
.map::after { content: ""; position: absolute; inset: 0; border: 4px solid #0c62cf; border-radius: 8px; }
.map-canvas path { vector-effect: non-scaling-stroke; fill: none; stroke-linejoin: round; }
.map-canvas .land { fill: #0d0d0d; }
.river { stroke: #1a1a1a; stroke-width: 9; }
.river .wide { stroke-width: 17; }
.map-canvas .pond path { fill: #1b1b1b; }
.thin { stroke: #1d1d1d; stroke-width: 1.6; }
.road { stroke: #292929; stroke-width: 5; }
.junction { stroke: #292929; stroke-width: 12; stroke-linecap: round; }
.border { stroke: #303030; stroke-width: 2; stroke-dasharray: 9 4; }
.casing { stroke: #343434; stroke-width: 9.8; }
.core { stroke: #000; stroke-width: 6.8; }
.hub { stroke: #000; stroke-width: 11; stroke-linecap: round; }
.labels {
  fill: #626262; stroke: #0b0b0b; stroke-width: 3; paint-order: stroke; stroke-linejoin: round;
  font: 19px Roboto, "Noto Sans", "Noto Sans Thai", sans-serif;
}
.labels .th { font-size: 20px; }
.labels .city { font-size: 27px; }
.markers { fill: #337d37; stroke: #fff; stroke-width: 2; }
.attribution {
  position: absolute; right: 0; bottom: 0; z-index: 1; width: 298px; height: 40px; padding-left: 9px;
  background: rgba(255, 255, 255, .5); color: #2b2b2b; white-space: nowrap;
  font: 24px/40px "Liberation Sans", Arial, sans-serif;
}
.save-row { display: flex; justify-content: flex-end; }
.save {
  display: flex; align-items: center; width: 172px; height: 56px; padding: 0 0 0 24px; border: 0; border-radius: 28px;
  background: #337d37; color: #fff; font: 700 23px/40px Roboto, sans-serif;
  box-shadow: 0 6px 10px -2px rgba(0, 0, 0, .2), 0 12px 20px rgba(0, 0, 0, .14), 0 2px 36px rgba(0, 0, 0, .12);
}
.save span { margin: 2px 0 0 17px; }
.menu { margin-top: 8px; color: #337d37; font-weight: 500; font-size: 27px; }
.item { display: flex; align-items: center; height: 88px; padding-left: 16px; gap: 16px; }
.item span { margin-top: -1px; }
.delete { color: #757575; }
.delete .icon { color: #f44640; }
.t-import { letter-spacing: .65px; }
.t-export { letter-spacing: .7px; }
.t-download { letter-spacing: 1px; }
.t-delete { letter-spacing: 1px; }
.field { position: relative; padding: 20px 26px; border: 2px solid #c0c0c0; border-radius: 8px; }
.field label {
  position: absolute; left: 16px; top: -16px; padding: 0 11px; background: #fafafa; color: #757575;
  font-size: 22px; line-height: 32px; letter-spacing: .8px;
}
.field .value { font-size: 31px; letter-spacing: .9px; }
.title { height: 80px; margin-top: 24px; }
.description { height: 156px; margin-top: 40px; }
.bbox-title, .bbox-value { font-size: 29px; line-height: 48px; }
.bbox-title { margin-top: 30px; letter-spacing: 1.5px; }
.bbox-value { margin-top: 4px; color: #757575; letter-spacing: .25px; }

/* Table */
.table-bar { display: flex; align-items: center; justify-content: space-between; height: 136px; }
h2 { margin: 4px 0 0; font-size: 30px; font-weight: 400; letter-spacing: 1px; }
.pager { display: flex; align-items: center; padding-right: 28px; white-space: nowrap; }
.rows { width: 217px; letter-spacing: .65px; }
.size { width: 60px; margin-top: -4px; }
.caret { width: 20px; height: 10px; margin-top: 2px; fill: #757575; }
.range { width: 230px; margin-left: 78px; letter-spacing: .15px; }
.prev { color: #bdbdbd; margin-right: 48px; }
.data { width: 2464px; table-layout: fixed; border-collapse: separate; border-spacing: 0; }
.c-id { width: 438px; } .c-date { width: 286px; } .c-place { width: 986px; }
.c-dead { width: 166px; } .c-lat { width: 298px; } .c-lng { width: 290px; }
th, td { height: 66px; padding: 11px 0 13px 32px; border-bottom: 2px solid #e0e0e0; text-align: left; white-space: nowrap; }
th { height: 74px; padding: 15px 0 17px 32px; font-weight: 500; letter-spacing: 1.1px; }
td:first-child { letter-spacing: .58px; }
td:nth-child(2) { letter-spacing: .3px; }
td.one-line:nth-child(2) { letter-spacing: -.45px; word-spacing: -1px; }
td.narrow:nth-child(2) { letter-spacing: -1px; }
td:nth-child(3) { font-size: 28.5px; }
td:nth-child(5) { letter-spacing: -.4px; }
td:nth-child(6) { letter-spacing: .05px; }
```
